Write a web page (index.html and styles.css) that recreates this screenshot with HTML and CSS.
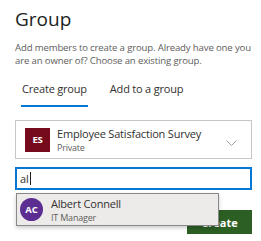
FILE: index.html
```html
<!DOCTYPE html>
<html lang="en">
<head>
  <meta charset="UTF-8" />
  <title>Group</title>
  <link rel="stylesheet" href="styles.css">
</head>
<body>
  <div class="panel">
    <h1>Group</h1>
    <p class="desc">Add members to create a group. Already have one you are an owner of? Choose an existing group.</p>

    <div class="tabs">
      <div class="tab active">Create group</div>
      <div class="tab">Add to a group</div>
    </div>

    <div class="select">
      <div class="square">ES</div>
      <div class="select-text">
        <div class="select-name">Employee Satisfaction Survey</div>
        <div class="select-sub">Private</div>
      </div>
      <svg class="chevron" width="11" height="6" viewBox="0 0 11 6"><path d="M0.5 0.5 L5.5 5.5 L10.5 0.5" fill="none" stroke="#a19f9d" stroke-width="1"/></svg>
    </div>

    <div class="search">
      <div class="input">al<span class="caret"></span></div>
      <div class="suggest">
        <div class="circle">AC</div>
        <div>
          <div class="person">Albert Connell</div>
          <div class="role">IT Manager</div>
        </div>
      </div>
    </div>

    <div class="actions">
      <button class="create">Create</button>
    </div>
  </div>
</body>
</html>
```

FILE: styles.css
```css
body {
  margin: 0;
  font-family: 'Open Sans', 'Noto Sans', sans-serif;
  background: #fff;
  color: #201f1e;
  letter-spacing: -0.2px;
}
.panel {
  padding: 6px 9px 0 15px;
}
h1 {
  margin: 0;
  font-size: 19px;
  font-weight: 400;
  line-height: 26px;
  letter-spacing: 0;
}
.desc {
  margin: 9px 0 0;
  font-size: 9.6px;
  line-height: 13px;
  color: #605e5c;
  letter-spacing: -0.15px;
}
.tabs {
  display: flex;
  gap: 21px;
  margin: 12px 0 0 6px;
}
.tab {
  font-size: 11px;
  line-height: 15px;
  padding: 2px 1px 9px;
  color: #323130;
}
.tab.active {
  border-bottom: 2px solid #0078d4;
}
.select {
  display: flex;
  align-items: center;
  margin-top: 13px;
  height: 37px;
  border: 1px solid #c8c6c4;
  padding: 0 14px 0 9px;
}
.square {
  width: 25px;
  height: 24px;
  background: #750b1c;
  color: #fff;
  font-size: 9.5px;
  font-weight: 700;
  display: flex;
  align-items: center;
  justify-content: center;
  margin-right: 7px;
}
.select-text {
  flex: 1;
}
.select-name {
  font-size: 11px;
  line-height: 15px;
  color: #323130;
}
.select-sub {
  font-size: 9px;
  line-height: 13px;
  color: #605e5c;
}
.chevron {
  margin-top: 6px;
}
.search {
  position: relative;
  margin-top: 8px;
}
.input {
  height: 19px;
  border: 2px solid #0078d4;
  font-size: 11px;
  line-height: 19px;
  padding-left: 3px;
  color: #323130;
}
.caret {
  display: inline-block;
  width: 1px;
  height: 13px;
  background: #201f1e;
  vertical-align: -2px;
  margin-left: 1px;
}
.suggest {
  position: absolute;
  top: 26px;
  left: 1px;
  width: 201px;
  height: 31px;
  background: #edebe9;
  border: 1px solid #8a8886;
  box-shadow: 0 2px 4px rgba(0, 0, 0, 0.2);
  display: flex;
  align-items: center;
  z-index: 2;
}
.circle {
  width: 23px;
  height: 23px;
  border-radius: 50%;
  background: #5c2e91;
  color: #fff;
  font-size: 9.5px;
  font-weight: 700;
  display: flex;
  align-items: center;
  justify-content: center;
  margin: 0 8px 0 3px;
  letter-spacing: 0;
}
.person {
  font-size: 11px;
  line-height: 15px;
  color: #323130;
}
.role {
  font-size: 9px;
  line-height: 13px;
  color: #605e5c;
}
.actions {
  display: flex;
  justify-content: flex-end;
  margin-top: 20px;
}
.create {
  width: 65px;
  height: 24px;
  border: none;
  background: #2c5f24;
  color: #fff;
  font-family: inherit;
  font-size: 11px;
  font-weight: 700;
  padding: 0;
}
```
